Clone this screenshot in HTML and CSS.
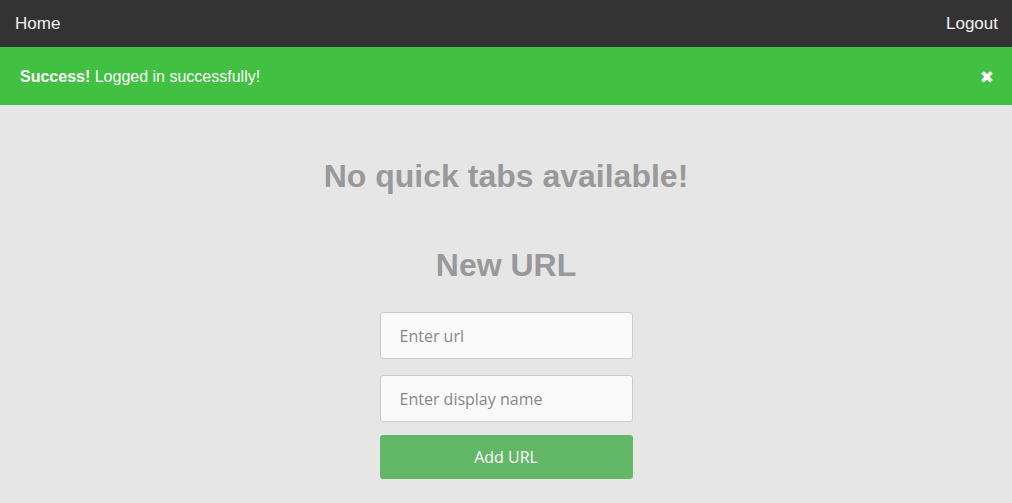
FILE: index.html
```html
<!DOCTYPE html>
<html>
<head>
<meta charset="utf-8">
<link rel="stylesheet" href="styles.css">
</head>
<body>
<nav class="navbar">
  <a class="nav-link" href="#">Home</a>
  <a class="nav-link" href="#">Logout</a>
</nav>
<div class="alert">
  <span><strong>Success!</strong> Logged in successfully!</span>
  <span class="close">&#x2716;</span>
</div>
<main class="content">
  <h1 class="title">No quick tabs available!</h1>
  <h2 class="subtitle">New URL</h2>
  <form class="url-form">
    <input class="field" type="text" placeholder="Enter url">
    <input class="field" type="text" placeholder="Enter display name">
    <button class="btn" type="button">Add URL</button>
  </form>
</main>
</body>
</html>
```

FILE: styles.css
```css
* { box-sizing: border-box; }
html, body {
  margin: 0;
  padding: 0;
  background: #e6e6e6;
  font-family: "Liberation Sans", Arial, sans-serif;
  height: 100%;
}
.navbar {
  height: 47px;
  background: #333333;
  display: flex;
  justify-content: space-between;
  align-items: center;
  padding: 0 14px 0 15px;
}
.nav-link {
  color: #f2f2f2;
  text-decoration: none;
  font-size: 17px;
}
.alert {
  height: 58px;
  background: #41c041;
  color: #ffffff;
  display: flex;
  justify-content: space-between;
  align-items: center;
  padding: 2px 18px 0 20px;
  font-size: 16px;
}
.close {
  font-size: 17px;
  font-weight: bold;
  font-family: "DejaVu Sans", sans-serif;
}
.content {
  display: flex;
  flex-direction: column;
  align-items: center;
}
.title {
  margin: 53px 0 0;
  font-size: 32px;
  font-weight: bold;
  color: #999999;
  line-height: 36px;
}
.subtitle {
  margin: 53px 0 0;
  font-size: 32px;
  font-weight: bold;
  color: #999999;
  line-height: 36px;
}
.url-form {
  margin-top: 29px;
  width: 253px;
  display: flex;
  flex-direction: column;
}
.field {
  height: 47px;
  margin-bottom: 16px;
  border: 1px solid #cccccc;
  border-radius: 3px;
  background: #fafafa;
  padding: 0 19px;
  font-family: "Open Sans", sans-serif;
  font-size: 16px;
  color: #555;
}
.field::placeholder { color: #888888; }
.field:last-of-type { margin-bottom: 13px; }
.btn {
  height: 44px;
  border: none;
  border-radius: 3px;
  background: #62b866;
  color: #ffffff;
  font-family: "Open Sans", sans-serif;
  font-size: 16px;
}
```
